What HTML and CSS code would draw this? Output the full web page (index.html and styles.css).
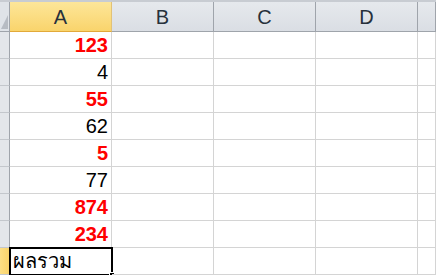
FILE: index.html
```html
<!DOCTYPE html>
<html lang="th">
<head>
    <meta charset="UTF-8">
    <title>Sheet1</title>
    <link rel="stylesheet" href="styles.css">
</head>
<body>
    <div class="sheet">
        <div class="corner"><span class="select-all"></span></div>
        <div class="col-head active">A</div>
        <div class="col-head">B</div>
        <div class="col-head">C</div>
        <div class="col-head">D</div>
        <div class="col-head"></div>

        <div class="row-head"></div>
        <div class="cell num red">123</div><div class="cell"></div><div class="cell"></div><div class="cell"></div><div class="cell"></div>
        <div class="row-head"></div>
        <div class="cell num">4</div><div class="cell"></div><div class="cell"></div><div class="cell"></div><div class="cell"></div>
        <div class="row-head"></div>
        <div class="cell num red">55</div><div class="cell"></div><div class="cell"></div><div class="cell"></div><div class="cell"></div>
        <div class="row-head"></div>
        <div class="cell num">62</div><div class="cell"></div><div class="cell"></div><div class="cell"></div><div class="cell"></div>
        <div class="row-head"></div>
        <div class="cell num red">5</div><div class="cell"></div><div class="cell"></div><div class="cell"></div><div class="cell"></div>
        <div class="row-head"></div>
        <div class="cell num">77</div><div class="cell"></div><div class="cell"></div><div class="cell"></div><div class="cell"></div>
        <div class="row-head"></div>
        <div class="cell num red">874</div><div class="cell"></div><div class="cell"></div><div class="cell"></div><div class="cell"></div>
        <div class="row-head"></div>
        <div class="cell num red">234</div><div class="cell"></div><div class="cell"></div><div class="cell"></div><div class="cell"></div>
        <div class="row-head active"></div>
        <div class="cell text selected">ผลรวม<span class="fill-handle"></span></div><div class="cell"></div><div class="cell"></div><div class="cell"></div><div class="cell"></div>
    </div>
</body>
</html>
```

FILE: styles.css
```css
/* Spreadsheet grid */
:root {
    --grid: #d4d4d4;
    --head-bg: #dfe3e8;
    --head-line: #9fa4ab;
    --head-text: #27313c;
    --active-bg: #fbdd7a;
    --active-line: #e2a93a;
}

* {
    margin: 0;
    padding: 0;
    box-sizing: border-box;
}

body {
    background: white;
    font-family: 'Liberation Sans', Arial, sans-serif;
    overflow: hidden;
}

.sheet {
    display: grid;
    grid-template-columns: 10px 102px 102px 102px 102px 1fr;
    grid-template-rows: 30px repeat(9, 27px);
    width: 436px;
    border-top: 2px solid #c8ccd2;
}

.corner {
    position: relative;
    background: #dfe3e8;
    border-right: 1px solid var(--head-line);
    border-bottom: 1px solid var(--head-line);
}

.select-all {
    position: absolute;
    right: 1px;
    bottom: 2px;
    width: 0;
    height: 0;
    border-left: 7px solid transparent;
    border-bottom: 14px solid #b7bcc3;
}

.col-head {
    display: flex;
    align-items: center;
    justify-content: center;
    background: linear-gradient(#e6e9ed, #dadee4);
    border-right: 1px solid var(--head-line);
    border-bottom: 1px solid var(--head-line);
    color: var(--head-text);
    font-size: 20px;
    padding-top: 1px;
}

.col-head.active {
    background: linear-gradient(#fde699, #f9d46c);
    border-bottom: 1px solid var(--active-line);
    border-right: 1px solid #e2c277;
}

.row-head {
    background: #e3e6ea;
    border-right: 1px solid var(--head-line);
    border-bottom: 1px solid #c3c7cc;
}

.row-head.active {
    background: linear-gradient(90deg, #fcdf85, #f9d36a);
    border-right: 1px solid var(--active-line);
}

.cell {
    position: relative;
    display: flex;
    align-items: center;
    border-right: 1px solid var(--grid);
    border-bottom: 1px solid var(--grid);
    font-size: 20px;
    color: black;
    white-space: nowrap;
}

.cell.num {
    justify-content: flex-end;
    padding-right: 3px;
}

.cell.red {
    color: #ff0000;
    font-weight: bold;
}

.cell.text {
    padding-left: 3px;
}

.cell.selected {
    outline: 2px solid black;
    outline-offset: -1px;
}

.fill-handle {
    position: absolute;
    right: -4px;
    bottom: -4px;
    width: 6px;
    height: 6px;
    background: black;
    border: 1px solid white;
}
```
